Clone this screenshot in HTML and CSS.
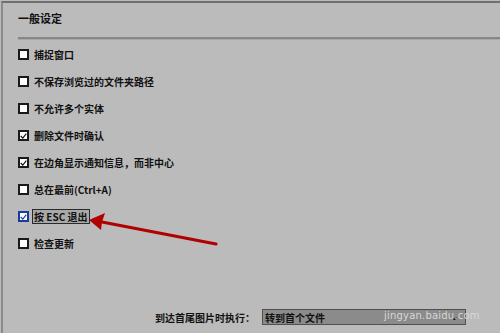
FILE: index.html
```html
<!DOCTYPE html>
<html>
<head>
<meta charset="utf-8">
<link rel="stylesheet" href="styles.css">
</head>
<body>
<div class="panel">
  <div class="title">一般设定</div>
  <div class="sep"></div>
  <ul class="list">
    <li class="item"><span class="box"></span><span class="label">捕捉窗口</span></li>
    <li class="item"><span class="box"></span><span class="label">不保存浏览过的文件夹路径</span></li>
    <li class="item"><span class="box"></span><span class="label">不允许多个实体</span></li>
    <li class="item"><span class="box checked"><svg viewBox="0 0 10 10" width="8" height="8"><path d="M1 5 L4 8 L9 1.5" fill="none" stroke="#111" stroke-width="1.6"/></svg></span><span class="label">删除文件时确认</span></li>
    <li class="item"><span class="box checked"><svg viewBox="0 0 10 10" width="8" height="8"><path d="M1 5 L4 8 L9 1.5" fill="none" stroke="#111" stroke-width="1.6"/></svg></span><span class="label">在边角显示通知信息，而非中心</span></li>
    <li class="item"><span class="box"></span><span class="label">总在最前(Ctrl+A)</span></li>
    <li class="item"><span class="box checked blue"><svg viewBox="0 0 10 10" width="8" height="8"><path d="M1 5 L4 8 L9 1.5" fill="none" stroke="#1a3aa0" stroke-width="1.6"/></svg></span><span class="label focus">按 ESC 退出</span></li>
    <li class="item"><span class="box"></span><span class="label">检查更新</span></li>
  </ul>
  <div class="bottom">
    <span class="blabel">到达首尾图片时执行：</span>
    <div class="select"><span>转到首个文件</span><span class="chev">⌄</span></div>
  </div>
  <div class="watermark">jingyan.baidu.com</div>
  <svg class="arrow" width="140" height="40" viewBox="0 0 140 40">
    <path d="M128 32 L14 10" stroke="#b00000" stroke-width="3.2" stroke-linecap="round" fill="none"/>
    <path d="M1 8 L17 1 L14 10 L13 18 Z" fill="#b00000"/>
  </svg>
</div>
</body>
</html>
```

FILE: styles.css
```css
html, body {
  margin: 0;
  padding: 0;
  width: 500px;
  height: 333px;
  overflow: hidden;
  background: #bbbbbb;
}
.panel {
  position: relative;
  box-sizing: border-box;
  width: 500px;
  height: 333px;
  background: #bbbbbb;
  border-top: 2px solid #6f6f6f;
  border-left: 2px solid #8a8a8a;
  margin-top: 1px;
  margin-left: 1px;
  font-family: "Noto Sans CJK SC", "DejaVu Sans", sans-serif;
  font-weight: bold;
  color: #111;
  font-size: 10px;
}
.title {
  padding: 6px 0 0 15px;
  height: 18px;
  line-height: 18px;
  font-size: 11px;
}
.sep {
  margin: 10px 0 0 15px;
  height: 2px;
  background: #878787;
  border-bottom: 1px solid #a8a8a8;
}
.list {
  list-style: none;
  margin: 0;
  padding: 1px 0 0 15px;
}
.item {
  display: flex;
  align-items: center;
  height: 27px;
  gap: 3px;
}
.box {
  box-sizing: border-box;
  width: 11px;
  height: 11px;
  background: #fff;
  border: 2px solid #1a1a1a;
  display: flex;
  align-items: center;
  justify-content: center;
}
.box.blue {
  border-color: #1a3aa0;
}
.label {
  line-height: 13px;
  padding: 0 1px;
  border: 1px solid transparent;
}
.label.focus {
  background: #a9a9a9;
  border: 1px solid #2a2a2a;
}
.bottom {
  position: absolute;
  left: 152px;
  top: 306px;
  display: flex;
  align-items: center;
  gap: 7px;
}
.select {
  box-sizing: border-box;
  width: 204px;
  height: 16px;
  background: #8b8b8b;
  border: 1px solid #505050;
  display: flex;
  align-items: center;
  justify-content: space-between;
  padding: 0 6px 0 2px;
}
.chev {
  font-size: 11px;
  line-height: 10px;
  margin-top: -4px;
}
.watermark {
  position: absolute;
  left: 381px;
  top: 307px;
  font-family: "DejaVu Sans", sans-serif;
  font-weight: normal;
  font-size: 10px;
  color: #d8d8d8;
  letter-spacing: 0.2px;
}
.arrow {
  position: absolute;
  left: 85px;
  top: 209px;
}
```
